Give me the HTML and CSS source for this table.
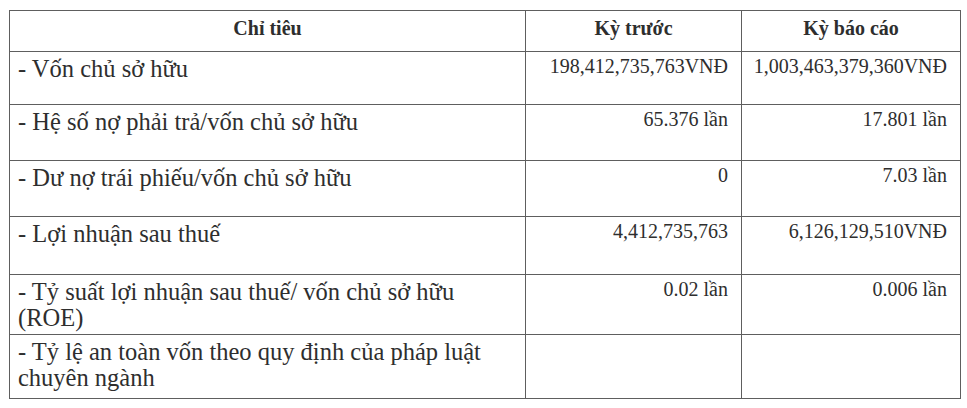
FILE: index.html
```html
<!DOCTYPE html>
<html lang="vi">
<head>
<meta charset="utf-8">
<title>Chỉ tiêu</title>
<link rel="stylesheet" href="styles.css">
</head>
<body>
<table class="report">
  <colgroup>
    <col class="c-label">
    <col class="c-prev">
    <col class="c-curr">
  </colgroup>
  <thead>
    <tr class="r-head">
      <th>Chỉ tiêu</th>
      <th>Kỳ trước</th>
      <th>Kỳ báo cáo</th>
    </tr>
  </thead>
  <tbody>
    <tr class="r1">
      <td class="label">- Vốn chủ sở hữu</td>
      <td class="num">198,412,735,763VNĐ</td>
      <td class="num">1,003,463,379,360VNĐ</td>
    </tr>
    <tr class="r2">
      <td class="label">- Hệ số nợ phải trả/vốn chủ sở hữu</td>
      <td class="num">65.376 lần</td>
      <td class="num">17.801 lần</td>
    </tr>
    <tr class="r3">
      <td class="label">- Dư nợ trái phiếu/vốn chủ sở hữu</td>
      <td class="num">0</td>
      <td class="num">7.03 lần</td>
    </tr>
    <tr class="r4">
      <td class="label">- Lợi nhuận sau thuế</td>
      <td class="num">4,412,735,763</td>
      <td class="num">6,126,129,510VNĐ</td>
    </tr>
    <tr class="r5">
      <td class="label">- Tỷ suất lợi nhuận sau thuế/ vốn chủ sở hữu<br>(ROE)</td>
      <td class="num">0.02 lần</td>
      <td class="num">0.006 lần</td>
    </tr>
    <tr class="r6">
      <td class="label">- Tỷ lệ an toàn vốn theo quy định của pháp luật<br>chuyên ngành</td>
      <td class="num"></td>
      <td class="num"></td>
    </tr>
  </tbody>
</table>
</body>
</html>
```
FILE: styles.css
```css
html, body {
  margin: 0;
  padding: 0;
  background: #ffffff;
}

body {
  font-family: "Liberation Serif", "Times New Roman", serif;
  color: #2e2e2e;
}

.report {
  margin: 10px 0 0 9px;
  width: 951px;
  border-collapse: collapse;
  table-layout: fixed;
}

.c-label { width: 516px; }
.c-prev { width: 216px; }
.c-curr { width: 219px; }

.report th,
.report td {
  border: 1px solid #5e5e5e;
  vertical-align: top;
  padding: 0;
}

.report th {
  font-size: 20px;
  line-height: 22px;
  font-weight: bold;
  text-align: center;
  padding-top: 6px;
}

.report td.label {
  font-size: 24.5px;
  line-height: 26px;
  padding: 4px 4px 0 8px;
}

.report td.num {
  font-size: 20px;
  line-height: 22px;
  text-align: right;
  padding: 3px 13px 0 4px;
}

.r-head { height: 41px; }
.r1 { height: 53px; }
.r2 { height: 56px; }
.r3 { height: 56px; }
.r4 { height: 58px; }
.r5 { height: 60px; }
.r6 { height: 64px; }
```
